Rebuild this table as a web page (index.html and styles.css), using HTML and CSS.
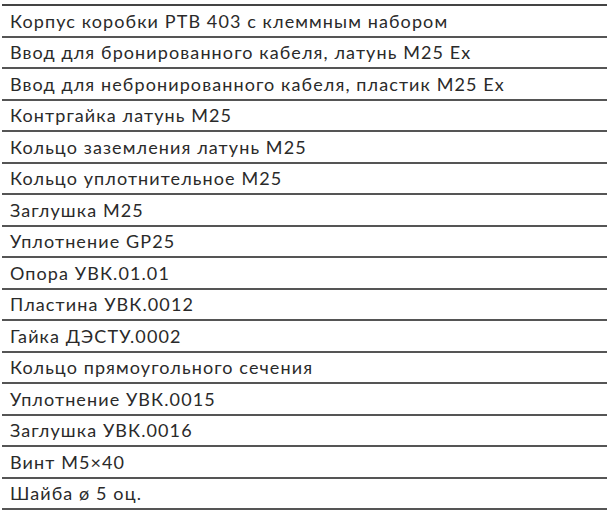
FILE: index.html
```html
<!DOCTYPE html>
<html lang="ru">
<head>
<meta charset="utf-8">
<link rel="stylesheet" href="styles.css">
</head>
<body>
<div class="list">
  <div class="row">Корпус коробки РТВ 403 с клеммным набором</div>
  <div class="row">Ввод для бронированного кабеля, латунь М25 Ex</div>
  <div class="row">Ввод для небронированного кабеля, пластик М25 Ex</div>
  <div class="row">Контргайка латунь М25</div>
  <div class="row">Кольцо заземления латунь М25</div>
  <div class="row">Кольцо уплотнительное М25</div>
  <div class="row">Заглушка М25</div>
  <div class="row">Уплотнение GP25</div>
  <div class="row">Опора УВК.01.01</div>
  <div class="row">Пластина УВК.0012</div>
  <div class="row">Гайка ДЭСТУ.0002</div>
  <div class="row">Кольцо прямоугольного сечения</div>
  <div class="row">Уплотнение УВК.0015</div>
  <div class="row">Заглушка УВК.0016</div>
  <div class="row">Винт М5×40</div>
  <div class="row">Шайба ø 5 оц.</div>
</div>
</body>
</html>
```

FILE: styles.css
```css
html, body {
  margin: 0;
  padding: 0;
  background: #ffffff;
}
body {
  padding: 4px 3px 0 2px;
  font-family: Lato, "Liberation Sans", sans-serif;
  font-size: 18px;
  font-weight: 400;
  letter-spacing: 1.1px;
  color: #2a2a2a;
}
.list {
  display: flex;
  flex-direction: column;
  border-top: 2px solid #444;
}
.row {
  box-sizing: border-box;
  height: 31.5px;
  display: flex;
  align-items: center;
  padding-left: 8px;
  border-bottom: 2px solid #555;
  white-space: nowrap;
}
```
